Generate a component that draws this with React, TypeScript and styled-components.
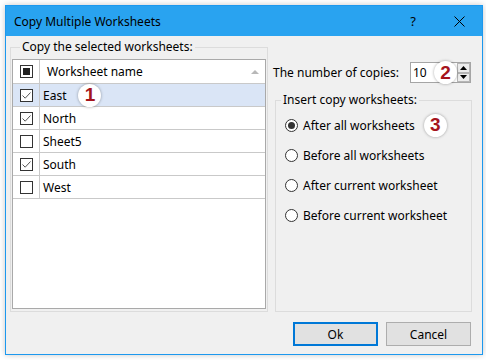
import React from "react";
import styled, { createGlobalStyle } from "styled-components";

const GlobalStyle = createGlobalStyle`
  html, body {
    margin: 0;
    padding: 0;
    background: #ffffff;
  }
  body {
    font-family: "Noto Sans", "Open Sans", sans-serif;
    font-size: 12px;
    color: #000;
  }
`;

const sheets = [
  { name: "East", checked: true, selected: true, badge: "1" },
  { name: "North", checked: true },
  { name: "Sheet5", checked: false },
  { name: "South", checked: true },
  { name: "West", checked: false },
];

const positions = [
  "After all worksheets",
  "Before all worksheets",
  "After current worksheet",
  "Before current worksheet",
];

export default function App() {
  return (
    <Page>
      <GlobalStyle />
      <Window>
        <TitleBar>
          <Title>Copy Multiple Worksheets</Title>
          <TitleButton>?</TitleButton>
          <TitleButton>
            <svg width="11" height="11" viewBox="0 0 11 11">
              <path d="M0.5 0.5 L10.5 10.5 M10.5 0.5 L0.5 10.5" stroke="#000" strokeWidth="1" />
            </svg>
          </TitleButton>
        </TitleBar>

        <Body>
          <Main>
            <LeftGroup>
              <Legend $offset={8}>Copy the selected worksheets:</Legend>
              <SheetList>
                <HeaderRow>
                  <CheckCell>
                    <Box>
                      <BoxFill />
                    </Box>
                  </CheckCell>
                  <HeaderName>
                    Worksheet name
                    <SortArrow />
                  </HeaderName>
                </HeaderRow>
                {sheets.map((s) => (
                  <SheetRow key={s.name} $selected={!!s.selected}>
                    <CheckCell>
                      <Box>
                        {s.checked && (
                          <svg width="11" height="11" viewBox="0 0 11 11">
                            <path d="M1.5 5.5 L4.2 8.2 L9.5 2.5" stroke="#555" strokeWidth="1" fill="none" />
                          </svg>
                        )}
                      </Box>
                    </CheckCell>
                    <NameCell>
                      {s.name}
                      {s.badge && <Badge $gap={12}>{s.badge}</Badge>}
                    </NameCell>
                  </SheetRow>
                ))}
              </SheetList>
            </LeftGroup>

            <RightPane>
              <CopiesRow>
                <span>The number of copies:</span>
                <SpinBox>
                  <SpinValue>10</SpinValue>
                  <Badge $gap={0}>2</Badge>
                  <SpinButtons>
                    <SpinButton>
                      <svg width="7" height="4" viewBox="0 0 7 4">
                        <path d="M3.5 0 L7 4 L0 4 Z" fill="#000" />
                      </svg>
                    </SpinButton>
                    <SpinButton>
                      <svg width="7" height="4" viewBox="0 0 7 4">
                        <path d="M0 0 L7 0 L3.5 4 Z" fill="#000" />
                      </svg>
                    </SpinButton>
                  </SpinButtons>
                </SpinBox>
              </CopiesRow>

              <RightGroup>
                <Legend $offset={-4}>Insert copy worksheets:</Legend>
                <RadioList>
                  {positions.map((p, i) => (
                    <RadioRow key={p}>
                      <Radio>{i === 0 && <RadioDot />}</Radio>
                      <span>{p}</span>
                      {i === 0 && <Badge $gap={4}>3</Badge>}
                    </RadioRow>
                  ))}
                </RadioList>
              </RightGroup>
            </RightPane>
          </Main>

          <Footer>
            <DialogButton $primary>Ok</DialogButton>
            <DialogButton>Cancel</DialogButton>
          </Footer>
        </Body>
      </Window>
    </Page>
  );
}

const Page = styled.div`
  padding: 5px;
`;

const Window = styled.div`
  width: 478px;
  height: 350px;
  box-sizing: border-box;
  border: 1px solid #1c98ee;
  background: #f0f0f0;
  box-shadow: 0 0 6px rgba(0, 0, 0, 0.22);
  display: flex;
  flex-direction: column;
`;

const TitleBar = styled.div`
  height: 30px;
  flex-shrink: 0;
  background: #29a3f0;
  display: flex;
  align-items: center;
  padding-left: 8px;
`;

const Title = styled.div`
  flex: 1;
  font-size: 12px;
`;

const TitleButton = styled.div`
  width: 46px;
  height: 30px;
  display: flex;
  align-items: center;
  justify-content: center;
  font-size: 13px;
`;

const Body = styled.div`
  flex: 1;
  display: flex;
  flex-direction: column;
  padding: 3px 10px 8px 4px;
`;

const Main = styled.div`
  flex: 1;
  display: flex;
  gap: 5px;
`;

const Legend = styled.legend<{ $offset: number }>`
  padding: 0 2px;
  margin-left: ${(p) => p.$offset}px;
  line-height: 16px;
`;

const LeftGroup = styled.fieldset`
  width: 258px;
  box-sizing: border-box;
  margin: 0;
  min-width: 0;
  border: 1px solid #dcdcdc;
  padding: 0 1px 2px 1px;
  display: flex;
  flex-direction: column;
`;

const SheetList = styled.div`
  flex: 1;
  margin-top: 4px;
  background: #fff;
  border: 1px solid #a9a9a9;
`;

const HeaderRow = styled.div`
  display: grid;
  grid-template-columns: 27px 1fr;
  height: 24px;
  box-sizing: border-box;
  border-bottom: 1px solid #c9c9c9;
`;

const SheetRow = styled.div<{ $selected: boolean }>`
  display: grid;
  grid-template-columns: 27px 1fr;
  height: 23px;
  box-sizing: border-box;
  border-bottom: 1px solid #c9c9c9;
  background: ${(p) => (p.$selected ? "#dae5f6" : "transparent")};
`;

const CheckCell = styled.div`
  border-right: 1px solid #c9c9c9;
  display: flex;
  align-items: center;
  justify-content: center;
`;

const Box = styled.div`
  width: 13px;
  height: 13px;
  box-sizing: border-box;
  border: 1px solid #333;
  background: #fff;
  display: flex;
  align-items: center;
  justify-content: center;
`;

const BoxFill = styled.div`
  width: 7px;
  height: 7px;
  background: #222;
`;

const HeaderName = styled.div`
  display: flex;
  align-items: center;
  padding: 0 6px 0 7px;
`;

const SortArrow = styled.div`
  margin-left: auto;
  width: 0;
  height: 0;
  border-left: 4px solid transparent;
  border-right: 4px solid transparent;
  border-bottom: 4px solid #b8b8b8;
`;

const NameCell = styled.div`
  display: flex;
  align-items: center;
  padding-left: 3px;
`;

const Badge = styled.span<{ $gap: number }>`
  width: 23px;
  height: 23px;
  margin: -2px 0 -2px ${(p) => p.$gap}px;
  flex-shrink: 0;
  border-radius: 50%;
  background: #fff;
  box-shadow: 0 0 3px rgba(0, 0, 0, 0.35);
  display: inline-flex;
  align-items: center;
  justify-content: center;
  font-family: "Liberation Sans", Arial, sans-serif;
  font-weight: bold;
  font-size: 19px;
  color: #a5141c;
  position: relative;
  z-index: 1;
`;

const RightPane = styled.div`
  flex: 1;
  display: flex;
  flex-direction: column;
`;

const CopiesRow = styled.div`
  margin-top: 23px;
  height: 21px;
  display: flex;
  align-items: center;
  justify-content: space-between;
`;

const SpinBox = styled.div`
  width: 61px;
  height: 21px;
  box-sizing: border-box;
  margin-right: 1px;
  border: 1px solid #a5a5a5;
  background: #fff;
  display: flex;
  align-items: center;
`;

const SpinValue = styled.span`
  flex: 1;
  padding-left: 2px;
`;

const SpinButtons = styled.div`
  display: flex;
  flex-direction: column;
  width: 13px;
  height: 19px;
`;

const SpinButton = styled.div`
  flex: 1;
  box-sizing: border-box;
  border: 1px solid #b5b5b5;
  background: #ececec;
  display: flex;
  align-items: center;
  justify-content: center;
`;

const RightGroup = styled.fieldset`
  flex: 1;
  margin: 9px 0 0 2px;
  min-width: 0;
  border: 1px solid #dcdcdc;
  padding: 2px 0 0 9px;
`;

const RadioList = styled.div`
  display: flex;
  flex-direction: column;
`;

const RadioRow = styled.div`
  height: 30px;
  display: flex;
  align-items: center;
  gap: 5px;
`;

const Radio = styled.div`
  width: 13px;
  height: 13px;
  box-sizing: border-box;
  border-radius: 50%;
  border: 1px solid #333;
  background: #fff;
  display: flex;
  align-items: center;
  justify-content: center;
`;

const RadioDot = styled.div`
  width: 7px;
  height: 7px;
  border-radius: 50%;
  background: #333;
`;

const Footer = styled.div`
  margin-top: 10px;
  display: flex;
  justify-content: flex-end;
  gap: 8px;
  padding-right: 1px;
`;

const DialogButton = styled.div<{ $primary?: boolean }>`
  width: 85px;
  height: 24px;
  box-sizing: border-box;
  border: ${(p) => (p.$primary ? "2px solid #0078d7" : "1px solid #adadad")};
  background: #e1e1e1;
  display: flex;
  align-items: center;
  justify-content: center;
`;
